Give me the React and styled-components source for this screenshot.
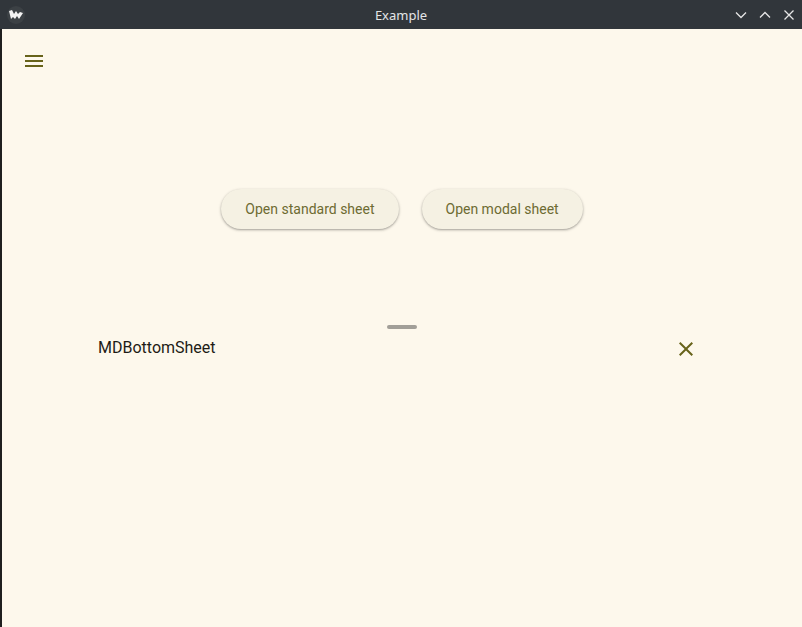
import React from "react";
import styled, { createGlobalStyle } from "styled-components";

const GlobalStyle = createGlobalStyle`
  html, body {
    margin: 0;
    padding: 0;
    background: #fdf8ec;
  }
  * {
    box-sizing: border-box;
  }
`;

const App = () => {
  return (
    <>
      <GlobalStyle />
      <Window>
        <TitleBar>
          <AppIcon>
            <svg width="14" height="10" viewBox="0 0 14 10">
              <path
                d="M0 1 L3 0 L5 4 L7 1 L9 4 L11 2 L14 3 L10 9 L8 6 L6 9 L4 7 L2 9 Z"
                fill="#f2f2f2"
              />
            </svg>
          </AppIcon>
          <WindowTitle>Example</WindowTitle>
          <WindowControls>
            <ControlButton>
              <svg width="14" height="14" viewBox="0 0 14 14">
                <path d="M2 4.5 L7 9.5 L12 4.5" stroke="#e6e6e6" strokeWidth="1.3" fill="none" />
              </svg>
            </ControlButton>
            <ControlButton>
              <svg width="14" height="14" viewBox="0 0 14 14">
                <path d="M2 9.5 L7 4.5 L12 9.5" stroke="#e6e6e6" strokeWidth="1.3" fill="none" />
              </svg>
            </ControlButton>
            <ControlButton>
              <svg width="14" height="14" viewBox="0 0 14 14">
                <path d="M2.5 2.5 L11.5 11.5 M11.5 2.5 L2.5 11.5" stroke="#e6e6e6" strokeWidth="1.3" fill="none" />
              </svg>
            </ControlButton>
          </WindowControls>
        </TitleBar>

        <Body>
          <Main>
            <TopBar>
              <IconButton>
                <svg width="24" height="24" viewBox="0 0 24 24">
                  <path d="M3 18h18v-2H3v2zm0-5h18v-2H3v2zm0-7v2h18V6H3z" fill="#67631a" />
                </svg>
              </IconButton>
            </TopBar>

            <ButtonRow>
              <TonalButton>Open standard sheet</TonalButton>
              <TonalButton>Open modal sheet</TonalButton>
            </ButtonRow>

            <Sheet>
              <DragHandle />
              <SheetHeader>
                <SheetTitle>MDBottomSheet</SheetTitle>
                <CloseButton>
                  <svg width="24" height="24" viewBox="0 0 24 24">
                    <path
                      d="M19 6.41L17.59 5 12 10.59 6.41 5 5 6.41 10.59 12 5 17.59 6.41 19 12 13.41 17.59 19 19 17.59 13.41 12z"
                      fill="#67631a"
                    />
                  </svg>
                </CloseButton>
              </SheetHeader>
            </Sheet>
          </Main>
        </Body>
      </Window>
    </>
  );
};

const Window = styled.div`
  width: 802px;
  height: 627px;
  display: flex;
  flex-direction: column;
  overflow: hidden;
`;

const TitleBar = styled.div`
  height: 29px;
  flex-shrink: 0;
  background: #31363b;
  display: flex;
  align-items: center;
  position: relative;
  padding: 0 6px 0 7px;
`;

const AppIcon = styled.div`
  width: 18px;
  height: 18px;
  border-radius: 50%;
  background: #3c4145;
  display: flex;
  align-items: center;
  justify-content: center;
`;

const WindowTitle = styled.div`
  position: absolute;
  left: 0;
  right: 0;
  text-align: center;
  font-family: "Noto Sans", "DejaVu Sans", sans-serif;
  font-size: 13px;
  color: #e3e5e7;
  pointer-events: none;
`;

const WindowControls = styled.div`
  margin-left: auto;
  display: flex;
  gap: 10px;
`;

const ControlButton = styled.div`
  width: 14px;
  height: 14px;
  display: flex;
`;

const Body = styled.div`
  flex: 1;
  display: flex;
  border-left: 2px solid #1f1f1f;
  background: #fdf8ec;
`;

const Main = styled.div`
  flex: 1;
  display: flex;
  flex-direction: column;
`;

const TopBar = styled.div`
  padding: 20px 0 0 20px;
  display: flex;
`;

const IconButton = styled.div`
  width: 24px;
  height: 24px;
  display: flex;
`;

const CloseButton = styled(IconButton)`
  margin-top: 1px;
`;

const ButtonRow = styled.div`
  margin-top: 116px;
  display: flex;
  justify-content: center;
  gap: 23px;
`;

const TonalButton = styled.button`
  height: 40px;
  padding: 0 24px;
  border: none;
  border-radius: 20px;
  background: #f5f1e3;
  box-shadow: 0 1px 2px rgba(0, 0, 0, 0.28), 0 1px 3px 1px rgba(0, 0, 0, 0.08);
  font-family: Roboto, "Liberation Sans", sans-serif;
  font-size: 14px;
  color: #6d6b32;
  cursor: pointer;
`;

const Sheet = styled.div`
  margin-top: 96px;
  display: flex;
  flex-direction: column;
  align-items: center;
`;

const DragHandle = styled.div`
  width: 30px;
  height: 4px;
  border-radius: 2px;
  background: #a29f98;
`;

const SheetHeader = styled.div`
  margin-top: 7px;
  width: 600px;
  margin-right: 8px;
  display: flex;
  align-items: flex-start;
  justify-content: space-between;
`;

const SheetTitle = styled.div`
  font-family: Roboto, "Liberation Sans", sans-serif;
  font-size: 16px;
  line-height: 24px;
  color: #1e1c16;
`;

export default App;
